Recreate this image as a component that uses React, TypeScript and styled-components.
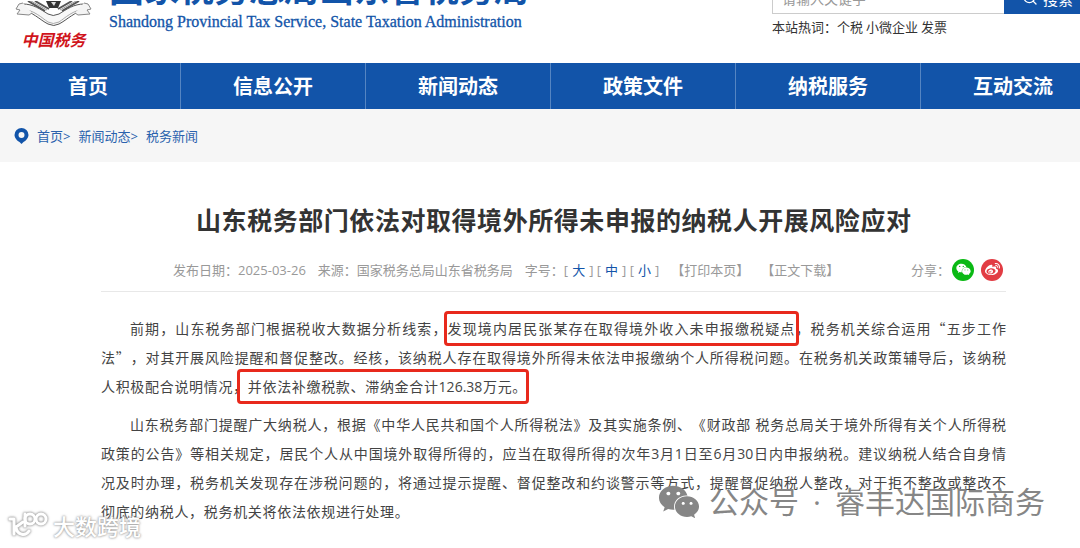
import React from 'react';
import styled, { createGlobalStyle } from 'styled-components';
import { Search } from 'lucide-react';
import { FaWeibo, FaWeixin } from 'react-icons/fa';

const BLUE = '#1254a9';

const GlobalStyle = createGlobalStyle`
  *, *::before, *::after { box-sizing: border-box; }
  body {
    margin: 0;
    background: #fff;
    color: #333;
    font-family: "Open Sans", "Noto Sans CJK SC", sans-serif;
    font-size: 13px;
    overflow: hidden;
  }
  a { color: inherit; text-decoration: none; }
`;

const Page = styled.div`
  position: relative;
  min-height: 100vh;
`;

const Header = styled.header`
  display: flex;
  justify-content: space-between;
  align-items: flex-end;
  height: 63px;
  overflow: hidden;
`;

const Brand = styled.a`
  display: flex;
  align-items: flex-end;
  gap: 17px;
  padding-left: 15px;
`;

const Emblem = styled.span`
  display: flex;
  flex-direction: column;
  align-items: center;
  width: 77px;
  padding-bottom: 13px;
`;

const EmblemName = styled.span`
  color: #d0141c;
  font: italic 700 16px/22px "Noto Sans CJK SC", sans-serif;
`;

const BrandText = styled.span`
  display: flex;
  flex-direction: column;
  gap: 1px;
  padding-bottom: 30px;
  color: ${BLUE};
`;

const BrandName = styled.span`
  font: 700 35px/46px "Noto Sans CJK SC", sans-serif;
`;

const BrandSub = styled.span`
  font: 16px/22px "Liberation Serif", serif;
  -webkit-text-stroke: 0.3px ${BLUE};
`;

const SearchArea = styled.div`
  display: flex;
  flex-direction: column;
  flex: 0 0 308px;
  padding-bottom: 26px;
`;

const SearchForm = styled.form`
  display: flex;
  height: 32px;
`;

const SearchInput = styled.input`
  flex: 1;
  min-width: 0;
  padding: 0 9px;
  border: 1px solid #ccc;
  border-right: 0;
  font: 14px "Noto Sans CJK SC", sans-serif;
  &::placeholder { color: #999; }
`;

const SearchButton = styled.button`
  display: flex;
  align-items: center;
  gap: 5px;
  flex: 0 0 76px;
  padding: 0 0 0 18px;
  border: 0;
  background: ${BLUE};
  color: #fff;
  font: 15px "Noto Sans CJK SC", sans-serif;
  white-space: nowrap;
`;

const HotWords = styled.div`
  display: flex;
  gap: 3px;
  padding-top: 3px;
  line-height: 20px;
  span { margin-right: -3px; }
`;

const Nav = styled.nav`
  height: 46px;
  background: ${BLUE};
  overflow: hidden;
`;

const NavList = styled.div`
  display: grid;
  grid-template-columns: repeat(6, 1fr);
  margin: 0 -26px 0 -4px;
`;

const NavItem = styled.a`
  border-right: 1px solid #5585c2;
  color: #fff;
  font-size: 20px;
  font-weight: 700;
  line-height: 48px;
  text-align: center;
`;

const Crumbs = styled.nav`
  display: flex;
  align-items: center;
  gap: 8px;
  height: 53px;
  padding-left: 14px;
  background: #f6f6f6;
  color: #2a62ad;
`;

const Article = styled.article`
  margin: 0 74px 0 101px;
`;

const Title = styled.h1`
  width: 79%;
  margin: 0 auto;
  padding-top: 38px;
  font-size: 25px;
  font-weight: 700;
  line-height: 40px;
  text-align-last: justify;
  white-space: nowrap;
`;

const Meta = styled.div`
  display: flex;
  align-items: center;
  height: 52px;
  padding: 8px 3px 0 72px;
  margin-bottom: 22px;
  border-bottom: 1px solid #e8e8e8;
  color: #999;
  white-space: nowrap;
`;

const MetaItem = styled.span`
  margin-right: 12px;
`;

const SizeButton = styled.button`
  padding: 0 4px;
  border: 0;
  background: none;
  color: ${BLUE};
  font: inherit;
`;

const TextButton = styled.button`
  margin-right: 12px;
  padding: 0;
  border: 0;
  background: none;
  color: inherit;
  font: inherit;
`;

const Share = styled.div`
  display: flex;
  align-items: center;
  gap: 7px;
  margin-left: auto;
  span { margin-right: -5px; }
`;

const ShareLink = styled.a<{ $color: string }>`
  display: flex;
  align-items: center;
  justify-content: center;
  width: 22px;
  height: 22px;
  border-radius: 50%;
  background: ${(p) => p.$color};
  color: #fff;
`;

const Paragraph = styled.p`
  margin: 0 0 9px;
  color: #444;
  font-size: 14px;
  line-height: 29px;
  text-spacing-trim: space-all;
`;

const Line = styled.span<{ $first?: boolean; $width?: string }>`
  display: block;
  width: ${(p) => p.$width ?? 'auto'};
  padding-left: ${(p) => (p.$first ? 29 : 0)}px;
  text-align-last: justify;
  white-space: nowrap;
`;

const Quote = styled.span`
  font-family: "Noto Sans CJK SC", sans-serif;
`;

const Marked = styled.mark<{ $lead?: number; $trail?: number }>`
  margin: 0 -${(p) => p.$trail ?? 0}px 0 -${(p) => p.$lead ?? 0}px;
  padding: 5px ${(p) => p.$trail ?? 0}px 5px ${(p) => p.$lead ?? 0}px;
  outline: 3px solid #e8291c;
  border-radius: 1px;
  background: none;
  color: inherit;
`;

const Account = styled.div`
  position: absolute;
  right: 35px;
  bottom: 25px;
  display: flex;
  align-items: center;
  gap: 14px;
  color: #868686;
  font-size: 30px;
  line-height: 40px;
  white-space: nowrap;
  svg { margin-right: -5px; }
`;

const SiteMark = styled.div`
  position: absolute;
  left: 8px;
  bottom: 8px;
  display: flex;
  align-items: center;
  gap: 5px;
  color: #fff;
  font: 500 22px/30px "Noto Sans CJK SC", sans-serif;
  text-shadow: 0 0 2px #999, 0 0 3px #aaa;
  svg { filter: drop-shadow(0 0 1px #999) drop-shadow(0 0 1px #bbb); }
`;

const EmblemArt = () => (
  <svg width="77" height="27" viewBox="0 0 77 27" fill="none" stroke="#555" aria-hidden="true">
    <path d="M13 0 30 10M20 0 34 8M64 0 47 10M57 0 43 8" strokeWidth="2" />
    <path d="M16 0 32 9M61 0 45 9" stroke="#999" />
    <path d="M31 0h15l-3 7H34z" fill="#333" stroke="none" />
    <path d="M36 1h5l-2 4z" fill="#ddd" stroke="none" />
    <path d="M8 3C18 3 25 8 33 13q5 3 11 0C52 8 59 3 69 3l2 6C60 10 52 19 44 23q-5 3-11 0C25 19 17 10 6 9z" fill="#f8f8f8" />
    <path d="M7 8C19 9 27 17 33 21q5 3 11 0C50 17 58 9 70 8" stroke="#aaa" />
    <path d="M8 2 4 3 1 8l4 1-3 4 12 1 3-2M69 2l4 1 3 5-4 1 3 4-12 1-3-2" fill="#f4f4f4" stroke="#888" />
  </svg>
);

const PinIcon = () => (
  <svg width="15" height="16" viewBox="0 0 14 16" aria-hidden="true">
    <path fill={BLUE} fillRule="evenodd" d="M7 0a7 7 0 0 1 7 7c0 3-3 6-5 7l-2 2-2-2C3 13 0 10 0 7a7 7 0 0 1 7-7zm0 4a3 3 0 1 0 0 6 3 3 0 0 0 0-6z" />
  </svg>
);

const HundredIcon = () => (
  <svg width="40" height="28" viewBox="0 0 40 28" fill="none" stroke="#fff" strokeWidth="3" strokeLinecap="round" strokeLinejoin="round" aria-hidden="true">
    <path d="M2 8h4v15M15 11 8 16c1 9 10 9 13 4" />
    <path d="M17 15V3" />
    <circle cx="22" cy="8" r="5" />
    <circle cx="33" cy="8" r="5" />
  </svg>
);

const NAV = ['首页', '信息公开', '新闻动态', '政策文件', '纳税服务', '互动交流'];
const HOT = ['个税', '小微企业', '发票'];

export default function App() {
  return (
    <Page>
      <GlobalStyle />
      <Header>
        <Brand href="#">
          <Emblem>
            <EmblemArt />
            <EmblemName>中国税务</EmblemName>
          </Emblem>
          <BrandText>
            <BrandName>国家税务总局山东省税务局</BrandName>
            <BrandSub>Shandong Provincial Tax Service, State Taxation Administration</BrandSub>
          </BrandText>
        </Brand>
        <SearchArea>
          <SearchForm role="search">
            <SearchInput aria-label="搜索" placeholder="请输入关键字" />
            <SearchButton type="button">
              <Search size={16} />
              搜索
            </SearchButton>
          </SearchForm>
          <HotWords>
            <span>本站热词：</span>
            {HOT.map((w) => <a key={w} href="#">{w}</a>)}
          </HotWords>
        </SearchArea>
      </Header>
      <Nav>
        <NavList>
          {NAV.map((n) => <NavItem key={n} href="#">{n}</NavItem>)}
        </NavList>
      </Nav>
      <Crumbs>
        <PinIcon />
        <a href="#">首页&gt;</a>
        <a href="#">新闻动态&gt;</a>
        <a href="#">税务新闻</a>
      </Crumbs>
      <Article>
        <Title>山东税务部门依法对取得境外所得未申报的纳税人开展风险应对</Title>
        <Meta>
          <MetaItem>发布日期：2025-03-26</MetaItem>
          <MetaItem>来源：国家税务总局山东省税务局</MetaItem>
          <MetaItem>
            字号：[<SizeButton>大</SizeButton>] [<SizeButton>中</SizeButton>] [<SizeButton>小</SizeButton>]
          </MetaItem>
          <TextButton>【打印本页】</TextButton>
          <TextButton>【正文下载】</TextButton>
          <Share>
            <span>分享：</span>
            <ShareLink href="#" aria-label="微信" $color="#0ab914"><FaWeixin size={15} /></ShareLink>
            <ShareLink href="#" aria-label="微博" $color="#e23c43"><FaWeibo size={15} /></ShareLink>
          </Share>
        </Meta>
        <Paragraph>
          <Line $first>
            前期，山东税务部门根据税收大数据分析线索，<Marked $lead={1} $trail={1}>发现境内居民张某存在取得境外收入未申报缴税疑点</Marked>，税务机关综合运用<Quote>“</Quote>五步工作
          </Line>
          <Line>法<Quote>”</Quote>，对其开展风险提醒和督促整改。经核，该纳税人存在取得境外所得未依法申报缴纳个人所得税问题。在税务机关政策辅导后，该纳税</Line>
          <Line $width="47%">
            人积极配合说明情况，<Marked $lead={8}>并依法补缴税款、滞纳金合计126.38万元。</Marked>
          </Line>
        </Paragraph>
        <Paragraph>
          <Line $first>山东税务部门提醒广大纳税人，根据《中华人民共和国个人所得税法》及其实施条例、《财政部 税务总局关于境外所得有关个人所得税</Line>
          <Line>政策的公告》等相关规定，居民个人从中国境外取得所得的，应当在取得所得的次年3月1日至6月30日内申报纳税。建议纳税人结合自身情</Line>
          <Line>况及时办理，税务机关发现存在涉税问题的，将通过提示提醒、督促整改和约谈警示等方式，提醒督促纳税人整改，对于拒不整改或整改不</Line>
          <Line $width="34%">彻底的纳税人，税务机关将依法依规进行处理。</Line>
        </Paragraph>
      </Article>
      <Account>
        <FaWeixin size={42} />
        <span>公众号</span>
        <span>·</span>
        <span>睿丰达国际商务</span>
      </Account>
      <SiteMark>
        <HundredIcon />
        <span>大数跨境</span>
      </SiteMark>
    </Page>
  );
}
